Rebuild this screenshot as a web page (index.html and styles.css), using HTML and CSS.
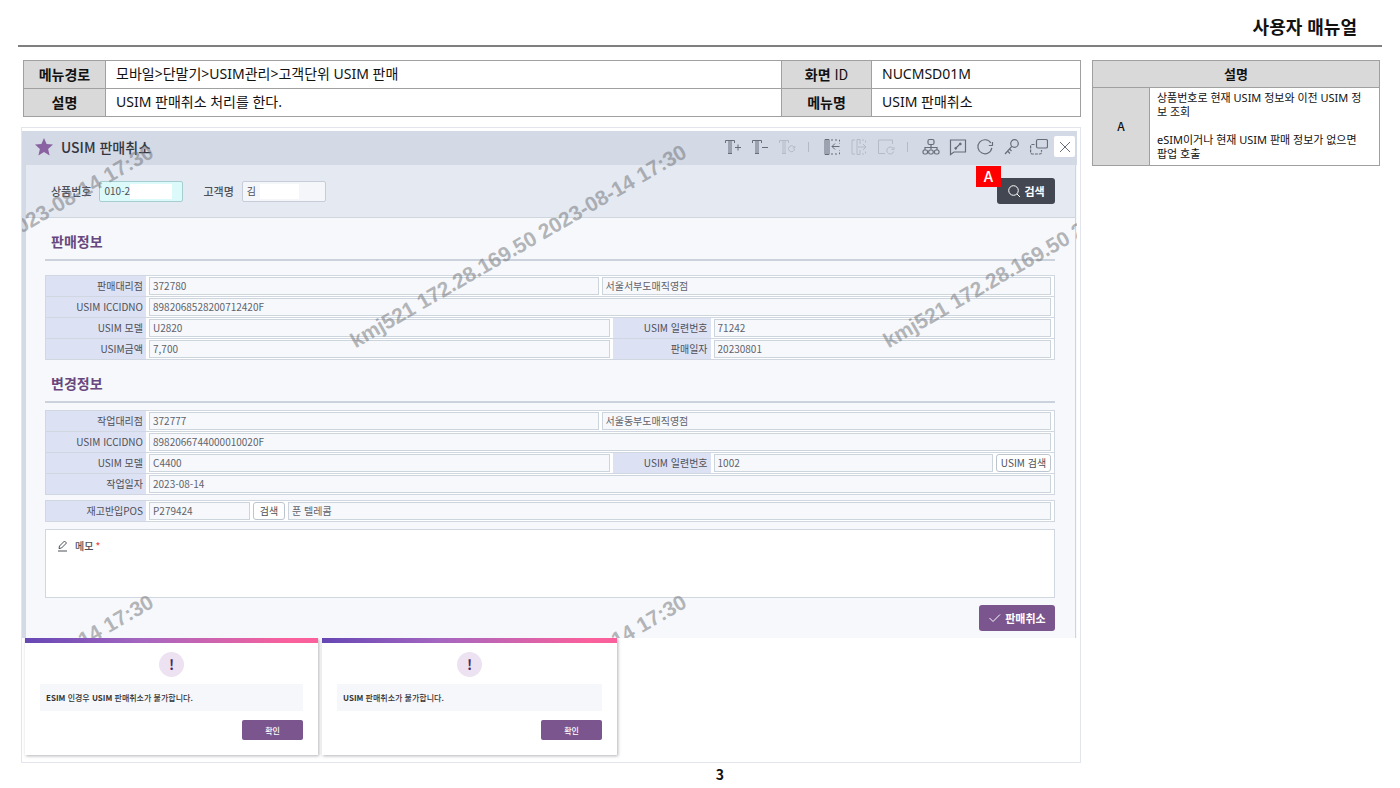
FILE: index.html
```html
<!DOCTYPE html>
<html lang="ko">
<head>
<meta charset="utf-8">
<title>사용자 매뉴얼</title>
<link rel="stylesheet" href="styles.css">
</head>
<body>
<header class="page-head"><h1>사용자 매뉴얼</h1></header>
<main class="page">
  <div class="left">
    <table class="info">
      <colgroup><col class="c-key"><col><col class="c-key2"><col class="c-val2"></colgroup>
      <tr><th scope="row">메뉴경로</th><td>모바일&gt;단말기&gt;USIM관리&gt;고객단위 USIM 판매</td><th scope="row">화면 <span class="plain">ID</span></th><td>NUCMSD01M</td></tr>
      <tr><th scope="row">설명</th><td>USIM 판매취소 처리를 한다.</td><th scope="row">메뉴명</th><td>USIM 판매취소</td></tr>
    </table>

    <div class="frame">
      <section class="app">
        <div class="app-head">
          <svg class="star" viewBox="0 0 18 18"><path d="M9 0l2.600 6 6.400.6-4.900 4.300 1.500 6.500L9 14l-5.600 3.400 1.500-6.500L0 6.600 6.400 6z"/></svg>
          <h2>USIM 판매취소</h2>
          <div class="tools">
            <button aria-label="글자 크게"><svg viewBox="0 0 18 18"><path d="M1.500 5V2.500h9V5M5 2.500v13M7 2.500v13M4 15.500h4M11 9.500h6M14 6.500v6"/></svg></button>
            <button aria-label="글자 작게"><svg viewBox="0 0 18 18"><path d="M1.500 5V2.500h9V5M5 2.500v13M7 2.500v13M4 15.500h4M11 9.500h6"/></svg></button>
            <button class="off" aria-label="글자 초기화"><svg viewBox="0 0 18 18"><path d="M1.500 5V2.500h9V5M5 2.500v13M7 2.500v13M4 15.500h4"/><path d="M15.800 8.800a3 3 0 1 0 .7 2.200M16.800 8v2h-2"/></svg></button>
            <i class="sep"></i>
            <button aria-label="왼쪽 접기"><svg viewBox="0 0 18 18"><path d="M2 1.500h4v15H2zM4 1.500v15M16.500 8.500H9M12 5.500l-3 3 3 3"/><path stroke-dasharray="2 2" d="M8 2h8.500v4M8 16h8.500v-4"/></svg></button>
            <button class="off" aria-label="오른쪽 펼치기"><svg viewBox="0 0 18 18"><path d="M10 6V1.500H7v15h3V12M8 9h8M13 6l3 3-3 3M5 2H2v14h3"/><path stroke-dasharray="2 2" d="M12 2h3.500v3M12 16h3.500v-3"/></svg></button>
            <button class="off" aria-label="화면 초기화"><svg viewBox="0 0 18 18"><path d="M15.500 6V2H1.500v13.500H8"/><path d="M16.200 10.500a3.500 3.500 0 1 0 .5 3M17 9v2.500h-2.500"/></svg></button>
            <i class="sep"></i>
            <button aria-label="메뉴 구조"><svg class="heavy" viewBox="0 0 18 18"><rect x="6" y="1.500" width="6" height="5" rx="1.500"/><path d="M9 6.500v5M3 12V9.500h12V12"/><rect x="1" y="12" width="4.500" height="4" rx="1.500"/><rect x="6.700" y="12" width="4.500" height="4" rx="1.500"/><rect x="12.500" y="12" width="4.500" height="4" rx="1.500"/></svg></button>
            <button aria-label="의견"><svg class="heavy" viewBox="0 0 18 18"><path d="M1.500 2h15v12H5l-3.500 2.500zM6.500 10.500l5-5"/><path class="bold" d="M5.800 9.500l1.700 1.700M10.500 5l1.800 1.800"/></svg></button>
            <button aria-label="새로고침"><svg class="heavy" viewBox="0 0 18 18"><path d="M15.800 9.800A7 7 0 1 1 14.800 5M16.800 7.500h-4M16.500 7.500V4"/></svg></button>
            <button aria-label="권한"><svg class="heavy" viewBox="0 0 18 18"><circle cx="11.500" cy="5.500" r="3.800"/><path d="M8.800 8.400L2 16M4.500 13l2.500 2.500M6.500 11l2 2"/></svg></button>
            <button aria-label="새 창"><svg class="heavy" viewBox="0 0 18 18"><rect x="6.500" y="1.500" width="11" height="8.500" rx="1.500"/><path stroke-dasharray="3 1" d="M4.500 6.500H2A1.500 1.500 0 0 0 .6 8v6.500A1.500 1.500 0 0 0 2 16h8a1.500 1.500 0 0 0 1.500-1.500V12"/></svg></button>
            <button class="close" aria-label="닫기"><svg viewBox="0 0 18 18"><path d="M4 4l10 10M14 4L4 14"/></svg></button>
          </div>
        </div>

        <div class="app-body">
          <div class="search">
            <label for="prod">상품번호</label>
            <span class="masked mask-a"><input id="prod" class="query active" value="010-22"></span>
            <label for="cust">고객명</label>
            <span class="masked mask-b"><input id="cust" class="query" value="김"></span>
            <div class="search-go">
              <button class="btn dark"><svg viewBox="0 0 14 14"><circle cx="6.500" cy="6.500" r="4.800"/><path d="M10 10l3 3"/></svg>검색</button>
              <span class="badge">A</span>
            </div>
          </div>

          <div class="content">
            <h3 class="first">판매정보</h3>
            <div class="form">
              <div class="row"><label for="a1">판매대리점</label><div class="cell"><input id="a1" readonly value="372780"><input aria-label="판매대리점명" readonly value="서울서부도매직영점"></div></div>
              <div class="row"><label for="a2">USIM ICCIDNO</label><div class="cell"><input id="a2" readonly value="8982068528200712420F"></div></div>
              <div class="row split"><label for="a3">USIM 모델</label><div class="cell"><input id="a3" readonly value="U2820"></div><label for="a4">USIM 일련번호</label><div class="cell"><input id="a4" readonly value="71242"></div></div>
              <div class="row split"><label for="a5">USIM금액</label><div class="cell"><input id="a5" readonly value="7,700"></div><label for="a6">판매일자</label><div class="cell"><input id="a6" readonly value="20230801"></div></div>
            </div>

            <h3>변경정보</h3>
            <div class="form">
              <div class="row"><label for="b1">작업대리점</label><div class="cell"><input id="b1" readonly value="372777"><input aria-label="작업대리점명" readonly value="서울동부도매직영점"></div></div>
              <div class="row"><label for="b2">USIM ICCIDNO</label><div class="cell"><input id="b2" readonly value="8982066744000010020F"></div></div>
              <div class="row split"><label for="b3">USIM 모델</label><div class="cell"><input id="b3" readonly value="C4400"></div><label for="b4">USIM 일련번호</label><div class="cell"><input id="b4" readonly value="1002"><button class="mini wide">USIM 검색</button></div></div>
              <div class="row"><label for="b5">작업일자</label><div class="cell"><input id="b5" readonly value="2023-08-14"></div></div>
            </div>
            <div class="form pos">
              <div class="row"><label for="p1">재고반입POS</label><div class="cell"><input id="p1" class="short" readonly value="P279424"><button class="mini">검색</button><input aria-label="POS명" readonly value="푼 텔레콤"></div></div>
            </div>

            <div class="memo">
              <label for="memo"><svg viewBox="0 0 12 12"><path d="M2 8.500l.5-2.500L7.500 1l2 2-5 5zM1 11h9"/></svg>메모<em>*</em></label>
              <textarea id="memo"></textarea>
            </div>
            <div class="actions"><button class="btn purple"><svg viewBox="0 0 14 14"><path d="M1.500 7l3.500 3.500 7-7"/></svg>판매취소</button></div>
          </div>
        </div>

        <div class="marks" aria-hidden="true">
          <span class="m1">kmj521 172.28.169.50 2023-08-14 17:30</span>
          <span class="m2">kmj521 172.28.169.50 2023-08-14 17:30</span>
          <span class="m3">kmj521 172.28.169.50 2023-08-14 17:30</span>
          <span class="m4">kmj521 172.28.169.50 2023-08-14 17:30</span>
          <span class="m5">kmj521 172.28.169.50 2023-08-14 17:30</span>
        </div>
      </section>

      <div class="alerts">
        <section class="alert">
          <div class="bang">!</div>
          <p><b>ESIM</b> 인경우 <b>USIM</b> 판매취소가 불가합니다.</p>
          <button>확인</button>
        </section>
        <section class="alert">
          <div class="bang">!</div>
          <p><b>USIM</b> 판매취소가 불가합니다.</p>
          <button>확인</button>
        </section>
      </div>
    </div>
  </div>

  <aside>
    <table class="notes">
      <colgroup><col class="c-note"><col></colgroup>
      <tr><th colspan="2">설명</th></tr>
      <tr><th class="mark" scope="row">A</th><td>상품번호로 현재 USIM 정보와 이전 USIM 정<br>보 조회<br><br>eSIM이거나 현재 USIM 판매 정보가 없으면<br>팝업 호출</td></tr>
    </table>
  </aside>
</main>
<footer>3</footer>
</body>
</html>
```

FILE: styles.css
```css
* { box-sizing: border-box; }
body {
  margin: 0;
  background: #fff;
  color: #111;
  font-family: "Noto Sans CJK KR", "Noto Sans", sans-serif;
  font-size: 14px;
}
h1, h2, h3, p { margin: 0; }
button, input, textarea { font: inherit; color: inherit; margin: 0; }
svg { fill: none; stroke: currentColor; flex: none; }

.page-head {
  height: 47px;
  margin: 0 18px;
  padding: 13px 25px 0 0;
  border-bottom: 2px solid #7f7f7f;
  text-align: right;
}
.page-head h1 { font-size: 18px; line-height: 26px; font-weight: 700; }

.page {
  display: grid;
  grid-template-columns: 1fr 288px;
  column-gap: 11px;
  align-items: start;
  padding: 13px 20px 0 21px;
}

/* manual tables */
.info, .notes { border-collapse: collapse; table-layout: fixed; }
.info { width: calc(100% - 2px); margin: 0 0 10px 2px; }
.info th, .info td, .notes th, .notes td { border: 1px solid #a0a0a0; }
.info th, .info td { height: 28px; padding: 0 10px 2px; line-height: 20px; }
.info td { text-align: left; font-family: "Noto Sans", "Noto Sans CJK KR", sans-serif; }
th { background: #d9d9d9; font-weight: 700; padding: 0; }
.plain { font-weight: 400; }
.c-key { width: 82px; }
.c-key2 { width: 90px; }
.c-val2 { width: 209px; }
.notes { width: 100%; }
.notes th { height: 27px; font-size: 13px; line-height: 20px; }
.notes .mark { padding-bottom: 2px; font-size: 12px; font-weight: 500; }
.notes td {
  padding: 3px 0 4px 7px;
  font-family: "Noto Sans", "Noto Sans CJK KR", sans-serif;
  font-size: 11px;
  line-height: 14px;
  white-space: nowrap;
}
.c-note { width: 57px; }

/* captured screen */
.frame { border: 1px solid #e2e5ec; padding: 3px 3px 7px 0; }
.app { position: relative; overflow: hidden; background: #f6f8fb; color: #4d5058; }
.app-head {
  display: flex;
  align-items: center;
  height: 34px;
  padding: 0 0 3px 13px;
  background: #d3d9e5;
}
.star { width: 18px; height: 18px; fill: #8a62a2; stroke: none; }
.app-head h2 { margin-left: 8px; font-size: 14px; line-height: 20px; font-weight: 500; color: #33363f; }
.tools { display: flex; align-items: center; margin-left: auto; padding-right: 2px; color: #676d7a; }
.tools button {
  display: grid;
  place-items: center;
  width: 27px;
  height: 21px;
  padding: 0;
  border: 0;
  background: none;
}
.tools svg { width: 18px; height: 18px; }
.tools .heavy { stroke-width: 1.2; }
.tools .bold { stroke-width: 2; }
.tools .off { color: #b4bac6; }
.tools .close { width: 21px; margin-left: 2px; background: #fff; border-radius: 2px; }
.sep { width: 1px; height: 10px; margin: 0 9px 0 8px; background: #b4bac6; }

.app-body { border-left: 4px solid #d3d9e5; border-right: 1px solid #cdd5df; margin-right: 1px; }
.search {
  display: flex;
  align-items: center;
  height: 53px;
  padding: 0 20px 0 25px;
  background: #e5eaf2;
  border-bottom: 1px solid #d0d6de;
  font-size: 11px;
  font-weight: 500;
}
.masked { position: relative; display: flex; width: 84px; margin: 0 20px 0 8px; }
.masked::after { content: ""; position: absolute; top: 3px; bottom: 3px; background: #fff; }
.mask-a::after { left: 31px; right: 11px; }
.mask-b::after { left: 18px; right: 27px; }
.query {
  width: 100%;
  height: 21px;
  padding: 0 4px 2px;
  border: 1px solid #c6cdd9;
  border-radius: 2px;
  background: #f4f6fa;
  font-size: 10px;
  font-weight: 400;
}
.query.active { background: #dcfaf9; border-color: #a6cdd0; }
.search-go { position: relative; margin-left: auto; }
.btn {
  display: flex;
  align-items: center;
  justify-content: center;
  gap: 3px;
  height: 26px;
  border: 0;
  border-radius: 3px;
  padding: 0 9px 1px;
  color: #fff;
  font-size: 11px;
  font-weight: 700;
}
.btn svg { width: 14px; height: 14px; }
.dark { width: 58px; background: #434752; }
.purple { width: 76px; background: #7b558e; }
.badge {
  position: absolute;
  left: -21px;
  top: -12px;
  width: 25px;
  height: 21px;
  background: #f00;
  color: #fff;
  font-size: 15px;
  line-height: 20px;
  text-align: center;
}

.content { padding: 0 20px 7px 19px; }
h3 {
  height: 43px;
  margin-bottom: 7px;
  padding: 13px 6px 0;
  border-bottom: 2px solid #ccd2dc;
  font-size: 14px;
  line-height: 20px;
  font-weight: 700;
  color: #68477e;
}
h3.first { margin-bottom: 14px; }
.form { border: 1px solid #d0d7e0; border-top: 0; font-size: 10px; }
.row { display: grid; grid-template-columns: 100px 1fr; height: 21px; border-top: 1px solid #d0d7e0; }
.row.split { grid-template-columns: 100px 466fr 98px 343fr; }
.row label { padding-right: 3px; background: #dde1f4; line-height: 19px; text-align: right; }
.cell { display: flex; gap: 3px; min-width: 0; padding: 1px 3px; background: #fff; }
.cell input {
  flex: 1;
  min-width: 0;
  height: 18px;
  padding: 0 3px 2px;
  border: 1px solid #ccd4dc;
  background: #f6f8fb;
  color: #5f636b;
}
.cell .short { flex: 0 0 101px; }
.mini {
  width: 32px;
  height: 18px;
  padding: 0;
  border: 1px solid #bcc4ce;
  border-radius: 3px;
  background: #fff;
  line-height: 14px;
}
.mini.wide { width: 55px; }
.pos { margin: 5px 0 7px; }
.memo {
  display: flex;
  flex-direction: column;
  height: 69px;
  padding: 7px 11px;
  border: 1px solid #d0d7e0;
  background: #fff;
}
.memo label { display: flex; align-items: center; font-size: 10px; line-height: 18px; font-weight: 500; }
.memo svg { width: 12px; height: 12px; margin-right: 6px; }
.memo em { margin-left: 2px; color: #f04848; font-style: normal; }
.memo textarea { flex: 1; min-height: 0; padding: 0; border: 0; resize: none; background: none; }
.actions { display: flex; justify-content: flex-end; margin-top: 7px; }

/* rotated security text laid over the screen */
.marks { position: absolute; inset: 0; pointer-events: none; }
.marks span {
  position: absolute;
  transform: rotate(-30deg);
  transform-origin: 0 100%;
  white-space: nowrap;
  font-family: "Liberation Sans", sans-serif;
  font-size: 21px;
  line-height: 21px;
  font-weight: 700;
  color: rgba(110, 112, 116, 0.5);
}
.m1 { left: -198px; top: 199px; }
.m2 { left: 335px; top: 199px; }
.m3 { left: 868px; top: 199px; }
.m4 { left: -198px; top: 649px; }
.m5 { left: 335px; top: 649px; }

.alerts { display: flex; gap: 4px; padding-left: 3px; }
.alert {
  display: flex;
  flex-direction: column;
  width: 293px;
  height: 117px;
  padding: 14px 15px 0;
  background: linear-gradient(90deg, #6647b4, #a566c0 40%, #f9609c 90%) top / 100% 5px no-repeat #fff;
  box-shadow: 1px 1px 3px rgba(60, 60, 80, 0.4);
  color: #333;
  font-size: 8px;
}
.alert:last-child { width: 295px; }
.bang {
  align-self: center;
  width: 25px;
  height: 25px;
  border-radius: 50%;
  background: #ece2f1;
  color: #4b2a66;
  font-size: 14px;
  line-height: 24px;
  font-weight: 700;
  text-align: center;
}
.alert p { margin: 7px 0 9px; padding: 0 6px; background: #f6f7fb; line-height: 27px; font-weight: 500; }
.alert button {
  align-self: flex-end;
  width: 61px;
  height: 20px;
  padding: 0;
  border: 0;
  border-radius: 2px;
  background: #7b558e;
  color: #fff;
  font-weight: 500;
}
footer { padding: 0 0 0 40px; font-size: 14px; line-height: 22px; font-weight: 700; text-align: center; }
```
